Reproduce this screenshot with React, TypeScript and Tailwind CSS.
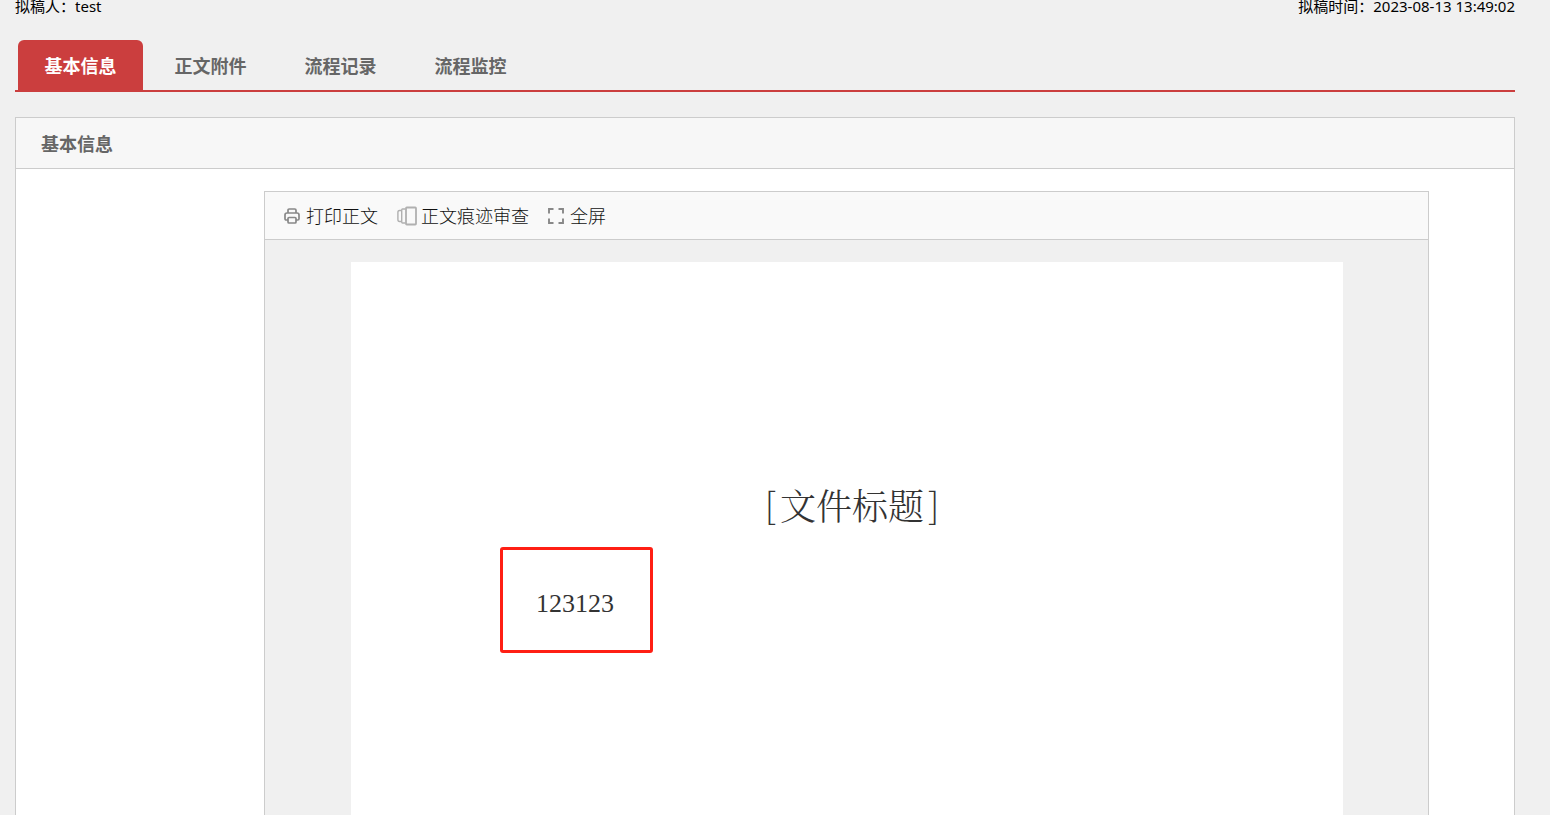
import { useState } from 'react';

const tabs = ['基本信息', '正文附件', '流程记录', '流程监控'];

function PrintIcon() {
  return (
    <svg width="16" height="16" viewBox="0 0 16 16" fill="none" stroke="#888888" strokeWidth="1.7" aria-hidden="true">
      <path d="M4 5V2.2Q4 1 5.2 1h5.6Q12 1 12 2.2V5" />
      <path d="M4 12H2.2Q1 12 1 10.8V7Q1 5 3 5h10q2 0 2 2v3.8q0 1.200-1.200 1.200H12" />
      <rect x="4" y="9.500" width="8" height="5.500" rx="1" />
    </svg>
  );
}

function TraceIcon() {
  return (
    <svg width="20" height="20" viewBox="0 0 20 20" fill="none" stroke="#b0b0b0" aria-hidden="true">
      <rect x="9" y="1.500" width="10" height="17" rx="0.800" strokeWidth="1.800" />
      <path d="M8.500 3H5.500Q4.700 3 4.700 4v12q0 1 .8 1h3" strokeWidth="1.400" />
      <path d="M4.500 4.500H2.500Q.9 4.500.9 6.500v7q0 2 1.600 2h2" strokeWidth="1.400" />
    </svg>
  );
}

function FullscreenIcon() {
  return (
    <svg width="16" height="16" viewBox="0 0 16 16" fill="none" stroke="#888888" strokeWidth="1.900" aria-hidden="true">
      <path d="M1 5.500V1h4.500M10.500 1H15v4.500M15 10.500V15h-4.500M5.500 15H1v-4.500" />
    </svg>
  );
}

export default function App() {
  const [active, setActive] = useState(0);

  return (
    <div className="flex h-screen flex-col overflow-hidden bg-[#f0f0f0] pr-[35px] pl-[15px] font-['Noto_Sans','Noto_Sans_CJK_SC',sans-serif]">
      <header className="flex h-4 shrink-0 items-start justify-between text-[15px] leading-3 text-black">
        <span>拟稿人：test</span>
        <span>拟稿时间：2023-08-13 13:49:02</span>
      </header>

      <nav className="mt-6 flex shrink-0 gap-[5px] border-b-2 border-[#cb3e3e] pl-[3px]">
        {tabs.map((tab, i) => (
          <button
            key={tab}
            type="button"
            onClick={() => setActive(i)}
            className={
              i === active
                ? 'h-[50px] w-[125px] rounded-t-md bg-[#cb3e3e] pt-0.5 text-lg font-bold text-white'
                : 'h-[50px] w-[125px] rounded-t-md pt-0.5 text-lg font-bold text-[#666666]'
            }
          >
            {tab}
          </button>
        ))}
      </nav>

      <section className="mt-[25px] flex min-h-0 grow flex-col border border-b-0 border-[#cccccc] bg-white">
        <h2 className="flex h-[51px] shrink-0 items-center border-b border-[#cccccc] bg-[#f7f7f7] pt-0.5 pl-[25px] text-lg font-bold text-[#666666]">
          基本信息
        </h2>

        <div className="mt-[22px] mr-[85px] ml-[248px] flex min-h-0 grow flex-col border border-b-0 border-[#cccccc] bg-[#f0f0f0]">
          <div className="flex h-12 shrink-0 items-center gap-[19px] border-b border-[#cccccc] bg-[#f9f9f9] pl-[19px] text-lg font-light text-[#111111]">
            <button type="button" className="flex items-center gap-1.5">
              <PrintIcon />
              打印正文
            </button>
            <button type="button" className="flex items-center gap-1">
              <TraceIcon />
              正文痕迹审查
            </button>
            <button type="button" className="flex items-center gap-1.5">
              <FullscreenIcon />
              全屏
            </button>
          </div>

          <article className="mr-[85px] ml-[86px] mt-[22px] min-h-0 grow bg-white pt-[221px] pl-[149px] font-['Liberation_Serif','Noto_Serif_CJK_SC','Noto_Sans_CJK_SC',serif] text-[#333333]">
            <h1 className="flex items-start justify-center gap-1 pr-[139px] text-4xl leading-[50px] font-light">
              <span className="font-['Noto_Sans_CJK_SC',sans-serif] leading-10">[</span>
              <span>文件标题</span>
              <span className="font-['Noto_Sans_CJK_SC',sans-serif] leading-10">]</span>
            </h1>
            <div className="mt-3.5 flex h-[106px] w-[153px] items-center rounded-[3px] border-3 border-[#ff1f14] pt-2 pl-[33px]">
              <p className="text-[26px] leading-8">123123</p>
            </div>
          </article>
        </div>
      </section>
    </div>
  );
}
